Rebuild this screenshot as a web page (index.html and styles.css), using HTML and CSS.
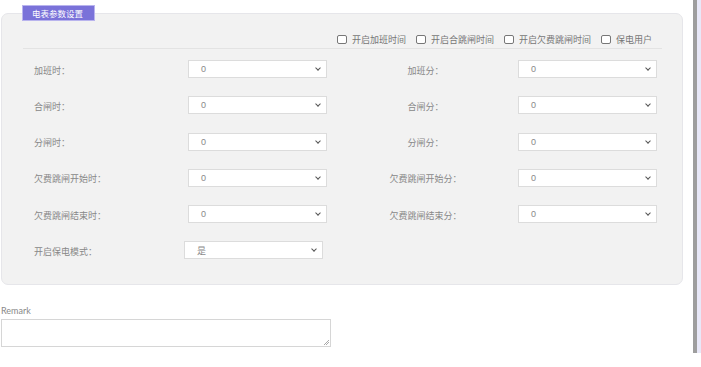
FILE: index.html
```html
<!DOCTYPE html>
<html lang="zh-CN">

<head>
    <meta charset="UTF-8">
    <meta name="viewport" content="width=device-width, initial-scale=1">
    <title>电表参数设置</title>
    <link rel="stylesheet" href="styles.css">
</head>

<body>
    <div class="page">
        <div class="content">
            <div class="section">
                <div class="tab">电表参数设置</div>
                <div class="panel">
                    <div class="options">
                        <label class="check"><span class="box"></span>开启加班时间</label>
                        <label class="check"><span class="box"></span>开启合跳闸时间</label>
                        <label class="check"><span class="box"></span>开启欠费跳闸时间</label>
                        <label class="check"><span class="box"></span>保电用户</label>
                    </div>
                    <div class="fields">
                        <div class="label">加班时：</div>
                        <div class="select">0</div>
                        <div class="label right">加班分：</div>
                        <div class="select">0</div>

                        <div class="label">合闸时：</div>
                        <div class="select">0</div>
                        <div class="label right">合闸分：</div>
                        <div class="select">0</div>

                        <div class="label">分闸时：</div>
                        <div class="select">0</div>
                        <div class="label right">分闸分：</div>
                        <div class="select">0</div>

                        <div class="label">欠费跳闸开始时：</div>
                        <div class="select">0</div>
                        <div class="label right">欠费跳闸开始分：</div>
                        <div class="select">0</div>

                        <div class="label">欠费跳闸结束时：</div>
                        <div class="select">0</div>
                        <div class="label right">欠费跳闸结束分：</div>
                        <div class="select">0</div>

                        <div class="label">开启保电模式：</div>
                        <div class="select shifted">是</div>
                    </div>
                </div>
            </div>
            <div class="remark">
                <div class="remark-label">Remark</div>
                <div class="textarea"><span class="grip"></span></div>
            </div>
        </div>
        <div class="scrollbar"></div>
    </div>
</body>

</html>
```

FILE: styles.css
```css
body {
    margin: 0;
    background: #fff;
    font-family: "Noto Sans CJK SC", "Noto Sans", sans-serif;
    font-size: 9px;
    color: #888;
}

.page {
    display: flex;
    width: 701px;
    height: 367px;
}

.content {
    width: 693px;
}

.section {
    padding: 5px 0 0 1px;
}

.tab {
    position: relative;
    z-index: 1;
    width: 53px;
    margin-left: 21px;
    margin-bottom: -8px;
    height: 14px;
    line-height: 14px;
    padding: 0 9px;
    background: #7a72d9;
    color: #fff;
    font-size: 8.5px;
    border: 1px solid #b9b4ee;
}

.panel {
    background: #f2f2f2;
    border: 1px solid #e6e6ea;
    border-radius: 7px;
    padding: 0 20px 0 21px;
    box-sizing: border-box;
    width: 682px;
    height: 272px;
}

.options {
    display: flex;
    justify-content: flex-end;
    align-items: center;
    gap: 10px;
    padding: 19px 10px 3px 0;
    height: 12px;
    border-bottom: 1px solid #e3e3e3;
    color: #777;
}

.check {
    display: flex;
    align-items: center;
    gap: 5px;
}

.box {
    width: 8px;
    height: 7px;
    border: 1px solid #777;
    border-radius: 2px;
    background: #fff;
}

.fields {
    display: grid;
    grid-template-columns: 165px 139px 191px 139px;
    row-gap: 18.3px;
    margin-top: 11px;
    align-items: center;
}

.label {
    padding-left: 11px;
    padding-top: 2px;
}

.label.right {
    text-align: center;
    padding-left: 6px;
}

.select {
    position: relative;
    height: 18px;
    line-height: 17px;
    background: #fff;
    border: 1px solid #dcdcdc;
    box-sizing: border-box;
    padding-left: 12px;
    color: #888;
    font-family: "Liberation Sans", "Noto Sans CJK SC", sans-serif;
}

.select::after {
    content: "";
    position: absolute;
    right: 6px;
    top: 5px;
    width: 3px;
    height: 3px;
    border-right: 1.2px solid #555;
    border-bottom: 1.2px solid #555;
    transform: rotate(45deg);
}

.select.shifted {
    margin-left: -4px;
    margin-right: 4px;
    font-family: "Noto Sans CJK SC", sans-serif;
}

.remark {
    padding: 20px 0 0 1px;
}

.remark-label {
    font-family: Lato, "Liberation Sans", sans-serif;
    font-size: 9px;
    color: #888;
    height: 14px;
    line-height: 12px;
}

.textarea {
    position: relative;
    width: 330px;
    height: 28px;
    border: 1px solid #d6d6d6;
    box-sizing: border-box;
    background: #fff;
}

.grip {
    position: absolute;
    right: 1px;
    bottom: 1px;
    width: 5px;
    height: 5px;
    background: linear-gradient(135deg, transparent 45%, #aaa 45%, #aaa 55%, transparent 55%, transparent 70%, #aaa 70%, #aaa 80%, transparent 80%);
}

.scrollbar {
    width: 8px;
    height: 353px;
    border-left: 4px solid #9e9e9e;
    background: #e8e8f8;
    box-sizing: border-box;
}
```
